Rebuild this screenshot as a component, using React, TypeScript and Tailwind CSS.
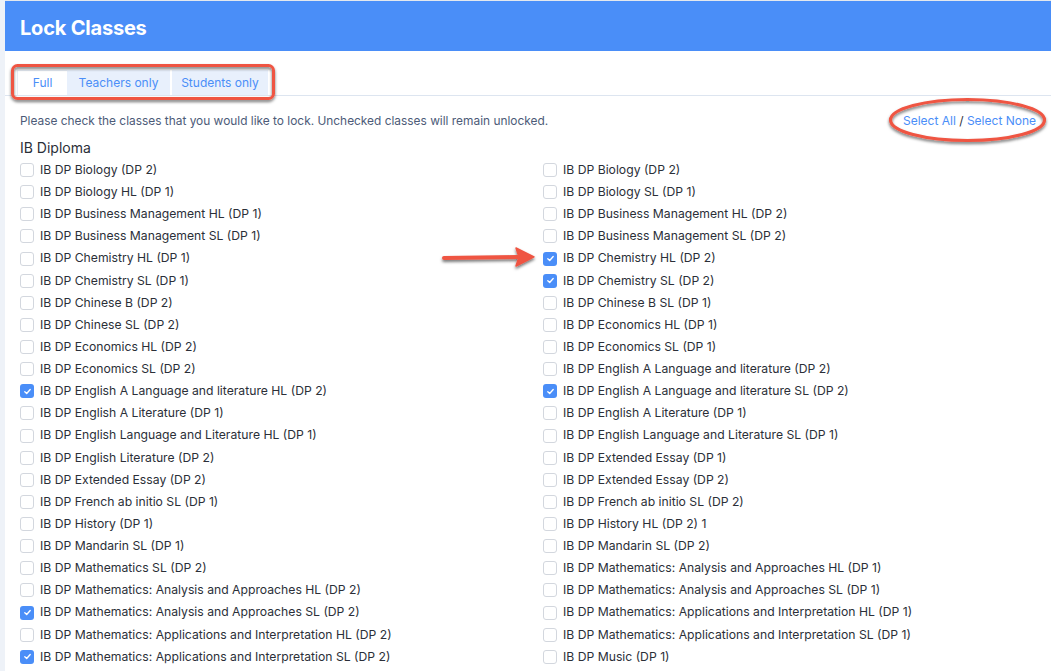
import React from "react";

type Item = { label: string; checked?: boolean };

const left: Item[] = [
  { label: "IB DP Biology (DP 2)" },
  { label: "IB DP Biology HL (DP 1)" },
  { label: "IB DP Business Management HL (DP 1)" },
  { label: "IB DP Business Management SL (DP 1)" },
  { label: "IB DP Chemistry HL (DP 1)" },
  { label: "IB DP Chemistry SL (DP 1)" },
  { label: "IB DP Chinese B (DP 2)" },
  { label: "IB DP Chinese SL (DP 2)" },
  { label: "IB DP Economics HL (DP 2)" },
  { label: "IB DP Economics SL (DP 2)" },
  { label: "IB DP English A Language and literature HL (DP 2)", checked: true },
  { label: "IB DP English A Literature (DP 1)" },
  { label: "IB DP English Language and Literature HL (DP 1)" },
  { label: "IB DP English Literature (DP 2)" },
  { label: "IB DP Extended Essay (DP 2)" },
  { label: "IB DP French ab initio SL (DP 1)" },
  { label: "IB DP History (DP 1)" },
  { label: "IB DP Mandarin SL (DP 1)" },
  { label: "IB DP Mathematics SL (DP 2)" },
  { label: "IB DP Mathematics: Analysis and Approaches HL (DP 2)" },
  { label: "IB DP Mathematics: Analysis and Approaches SL (DP 2)", checked: true },
  { label: "IB DP Mathematics: Applications and Interpretation HL (DP 2)" },
  { label: "IB DP Mathematics: Applications and Interpretation SL (DP 2)", checked: true },
];

const right: Item[] = [
  { label: "IB DP Biology (DP 2)" },
  { label: "IB DP Biology SL (DP 1)" },
  { label: "IB DP Business Management HL (DP 2)" },
  { label: "IB DP Business Management SL (DP 2)" },
  { label: "IB DP Chemistry HL (DP 2)", checked: true },
  { label: "IB DP Chemistry SL (DP 2)", checked: true },
  { label: "IB DP Chinese B SL (DP 1)" },
  { label: "IB DP Economics HL (DP 1)" },
  { label: "IB DP Economics SL (DP 1)" },
  { label: "IB DP English A Language and literature (DP 2)" },
  { label: "IB DP English A Language and literature SL (DP 2)", checked: true },
  { label: "IB DP English A Literature (DP 1)" },
  { label: "IB DP English Language and Literature SL (DP 1)" },
  { label: "IB DP Extended Essay (DP 1)" },
  { label: "IB DP Extended Essay (DP 2)" },
  { label: "IB DP French ab initio SL (DP 2)" },
  { label: "IB DP History HL (DP 2) 1" },
  { label: "IB DP Mandarin SL (DP 2)" },
  { label: "IB DP Mathematics: Analysis and Approaches HL (DP 1)" },
  { label: "IB DP Mathematics: Analysis and Approaches SL (DP 1)" },
  { label: "IB DP Mathematics: Applications and Interpretation HL (DP 1)" },
  { label: "IB DP Mathematics: Applications and Interpretation SL (DP 1)" },
  { label: "IB DP Music (DP 1)" },
];

function Check({ item }: { item: Item }) {
  return (
    <label className="flex items-center h-[22.14px]">
      {item.checked ? (
        <span className="w-[14px] h-[14px] rounded-[3px] bg-[#4a8ef8] flex items-center justify-center">
          <svg width="9" height="9" viewBox="0 0 10 10" fill="none">
            <path d="M2 5.2 L4.1 7.2 L8 2.8" stroke="white" strokeWidth="1.5" strokeLinecap="round" strokeLinejoin="round" />
          </svg>
        </span>
      ) : (
        <span className="w-[14px] h-[14px] rounded-[3px] border border-[#d3d7de] bg-white" />
      )}
      <span className="ml-[6px] text-[12.2px] text-[#2b2f38] whitespace-nowrap">{item.label}</span>
    </label>
  );
}

export default function App() {
  const rows: Item[] = [];
  left.forEach((l, i) => {
    rows.push(l);
    rows.push(right[i]);
  });

  return (
    <div className="relative w-[1051px] h-[671px] overflow-hidden flex bg-white" style={{ fontFamily: "Inter, 'Noto Sans', sans-serif" }}>
      <div className="w-[5px] bg-[#eef2f8] shrink-0" />
      <div className="flex-1 flex flex-col">
        <div className="h-[1px] bg-[#e4e8ee]" />
        <div className="h-[50px] bg-[#4a8ef8] flex items-center px-[15px] pt-[3px]">
          <h1 className="text-white text-[20px] font-bold tracking-[-0.2px]">Lock Classes</h1>
        </div>

        {/* tabs */}
        <div className="mt-[19px] px-[12px] border-b border-[#dde5f0] flex">
          <div className="h-[25px] w-[50px] bg-white border-t border-l border-[#e6ecf5] flex items-center justify-center text-[12px] text-[#4a8ef8]">Full</div>
          <div className="h-[25px] w-[103px] bg-[#e8f0fc] flex items-center justify-center text-[12px] text-[#4a8ef8]">Teachers only</div>
          <div className="h-[25px] w-[96px] ml-[2px] bg-[#e8f0fc] flex items-center justify-center text-[12px] text-[#4a8ef8]">Students only</div>
        </div>

        <div className="pl-[15px] pr-[10px]">
          <div className="mt-[17px] flex items-center justify-between h-[16px]">
            <p className="text-[11.9px] text-[#4d5b78]">Please check the classes that you would like to lock. Unchecked classes will remain unlocked.</p>
            <p className="text-[12px] text-[#4a8ef8] mr-[5px]">
              Select All <span className="text-[#2b2f38]">/</span> Select None
            </p>
          </div>
          <div className="mt-[8px] h-[20px] flex items-center text-[14px] text-[#2b2f38]">IB Diploma</div>
          <div className="mt-[2px] grid grid-cols-[523px_1fr]">
            {rows.map((r, i) => (
              <Check key={i} item={r} />
            ))}
          </div>
        </div>
      </div>

      {/* annotations */}
      <svg className="absolute inset-0 pointer-events-none" width="1051" height="671">
        <defs>
          <filter id="sh" x="-20%" y="-50%" width="140%" height="200%">
            <feDropShadow dx="0" dy="2" stdDeviation="1.6" floodColor="#000" floodOpacity="0.55" />
          </filter>
        </defs>
        <rect x="12.5" y="65.5" width="261" height="33" rx="5" fill="none" stroke="#ef5443" strokeWidth="3" filter="url(#sh)" />
        <ellipse cx="967.5" cy="120" rx="77" ry="20.5" fill="none" stroke="#ef5443" strokeWidth="3.2" filter="url(#sh)" />
        <g filter="url(#sh)">
          <line x1="444" y1="258" x2="518" y2="257" stroke="#ef5443" strokeWidth="4" strokeLinecap="round" />
          <path d="M534 256.8 L516 248 L519 257 L516 266 Z" fill="#ef5443" stroke="#ef5443" strokeWidth="1.5" strokeLinejoin="round" />
        </g>
      </svg>
    </div>
  );
}
